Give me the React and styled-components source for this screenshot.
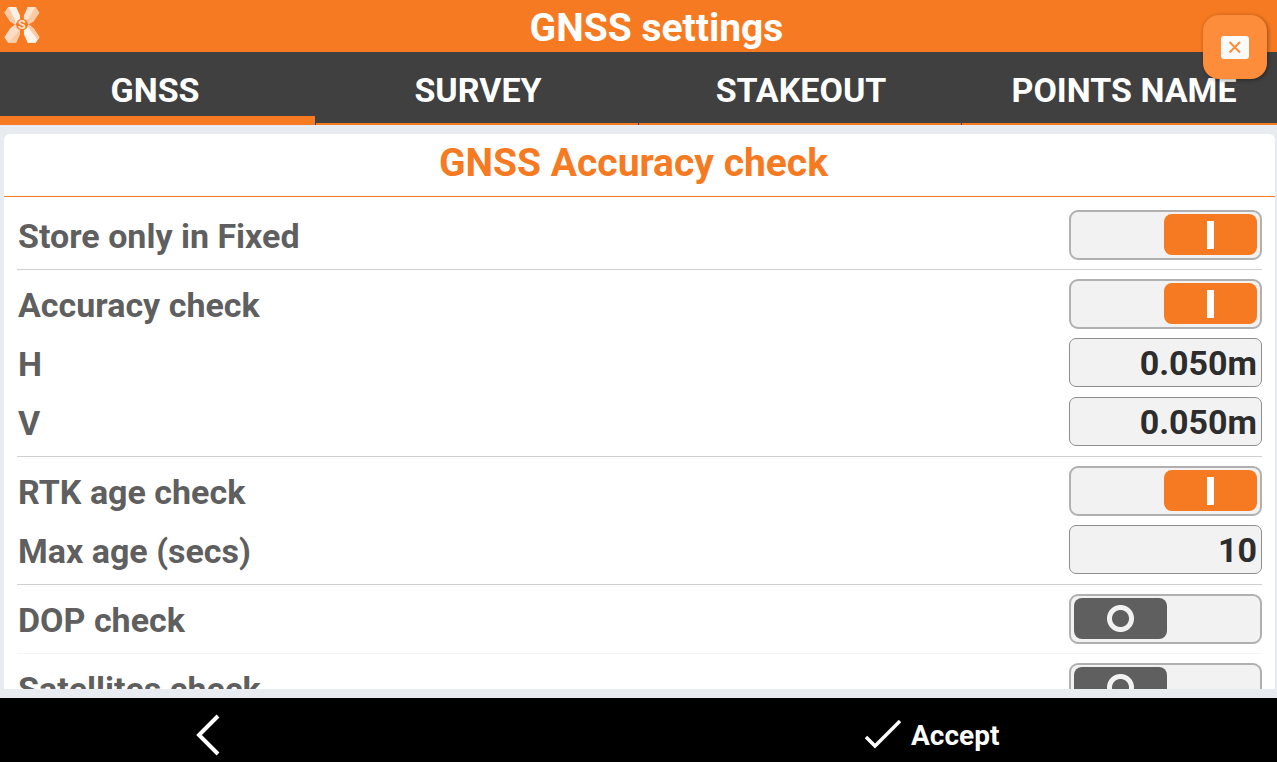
import React, { useState } from "react";
import styled, { createGlobalStyle } from "styled-components";

const tabs = ["GNSS", "SURVEY", "STAKEOUT", "POINTS NAME"];

const groups = [
  [{ id: "fixed", label: "Store only in Fixed", type: "toggle", value: true }],
  [
    { id: "accuracy", label: "Accuracy check", type: "toggle", value: true },
    { id: "h", label: "H", type: "text", value: "0.050m" },
    { id: "v", label: "V", type: "text", value: "0.050m" },
  ],
  [
    { id: "rtk", label: "RTK age check", type: "toggle", value: true },
    { id: "maxAge", label: "Max age (secs)", type: "text", value: "10" },
  ],
  [{ id: "dop", label: "DOP check", type: "toggle", value: false }],
  [{ id: "satellites", label: "Satellites check", type: "toggle", value: false }],
];

const Logo = () => (
  <svg width="36" height="36" viewBox="0 0 36 37" aria-hidden="true">
    <path d="M0 6L4 0H12L16 9V14L11 18L6 15Z" fill="#fff0e4" />
    <path d="M0 6L4 0L11 14L11 18L6 15Z" fill="#fcc9a5" />
    <path d="M36 6L32 0H24L20 9V14L25 18L30 15Z" fill="#fcc9a5" />
    <path d="M24 0H32L24 13L20 12V9Z" fill="#fee3cf" />
    <path d="M0 31L4 37H12L16 28V23L11 18L6 22Z" fill="#fcc9a5" />
    <path d="M11 18L16 23L4 37L0 31L6 22Z" fill="#fddcc4" />
    <path d="M36 31L32 37H24L20 28V23L25 18L30 22Z" fill="#fff3ea" />
    <path d="M25 18L30 22L36 31L34 34L24 20Z" fill="#fcc9a5" />
    <circle cx="18" cy="18" r="6" fill="#f67a21" />
    <text
      x="18"
      y="23"
      textAnchor="middle"
      fontFamily="Roboto, sans-serif"
      fontWeight="700"
      fontSize="13"
      fill="#fee3cf"
    >
      S
    </text>
  </svg>
);

const CloseIcon = () => (
  <svg width="28" height="23" viewBox="0 0 28 23" aria-hidden="true">
    <rect width="28" height="23" rx="3" fill="#fafafa" />
    <path d="M8.5 6L19 16.5M19 6L8.5 16.5" stroke="#fc8c3a" strokeWidth="2" />
  </svg>
);

const BackIcon = () => (
  <svg width="24" height="42" viewBox="0 0 24 42" aria-hidden="true">
    <path d="M22 2L3 21L22 40" fill="none" stroke="#fff" strokeWidth="4" />
  </svg>
);

const CheckIcon = () => (
  <svg width="36" height="30" viewBox="0 0 36 30" aria-hidden="true">
    <path d="M1 17L10 26L35 1" fill="none" stroke="#fff" strokeWidth="3.4" />
  </svg>
);

const Setting = ({ id, label, type, value }) => {
  const [current, setCurrent] = useState(value);

  return (
    <Row>
      <Label htmlFor={id}>{label}</Label>
      {type === "toggle" ? (
        <Toggle
          id={id}
          type="checkbox"
          checked={current}
          onChange={(e) => setCurrent(e.target.checked)}
        />
      ) : (
        <Field
          id={id}
          type="text"
          value={current}
          onChange={(e) => setCurrent(e.target.value)}
        />
      )}
    </Row>
  );
};

const App = () => {
  const [activeTab, setActiveTab] = useState("GNSS");

  return (
    <Page>
      <GlobalStyle />
      <Header>
        <Logo />
        <Title>GNSS settings</Title>
        <CloseButton type="button" aria-label="Close">
          <CloseIcon />
        </CloseButton>
      </Header>
      <Tabs>
        {tabs.map((tab) => (
          <Tab
            key={tab}
            type="button"
            $active={tab === activeTab}
            onClick={() => setActiveTab(tab)}
          >
            {tab}
          </Tab>
        ))}
      </Tabs>
      <Content>
        <Card>
          <CardTitle>GNSS Accuracy check</CardTitle>
          {groups.map((group) => (
            <Group key={group[0].id} $faint={group[0].id === "dop"}>
              {group.map((item) => (
                <Setting key={item.id} {...item} />
              ))}
            </Group>
          ))}
        </Card>
      </Content>
      <Footer>
        <FooterButton type="button" aria-label="Back">
          <BackIcon />
        </FooterButton>
        <span />
        <FooterButton type="button">
          <CheckIcon />
          Accept
        </FooterButton>
      </Footer>
    </Page>
  );
};

const GlobalStyle = createGlobalStyle`
  * {
    box-sizing: border-box;
  }
  body {
    margin: 0;
    font-family: Roboto, "Liberation Sans", sans-serif;
  }
  button,
  input {
    font-family: inherit;
  }
`;

const Page = styled.div`
  display: flex;
  flex-direction: column;
  height: 100vh;
  overflow: hidden;
  background: #e8ebf0;
`;

const Header = styled.header`
  position: relative;
  display: grid;
  grid-template-columns: 36px 1fr;
  align-items: center;
  flex: none;
  height: 52px;
  padding: 0 4px 2px;
  background: #f67a21;
`;

const Title = styled.h1`
  margin: 0;
  padding-top: 6px;
  color: #fff;
  font-size: 39px;
  font-weight: 700;
  line-height: 44px;
  text-align: center;
`;

const CloseButton = styled.button`
  position: absolute;
  top: 15px;
  right: 10px;
  z-index: 1;
  display: flex;
  align-items: center;
  justify-content: center;
  width: 64px;
  height: 64px;
  padding: 0;
  border: none;
  border-radius: 16px;
  background: #fd8d3b;
  box-shadow: 1px 1px 4px rgba(0, 0, 0, 0.4);
  cursor: pointer;
`;

const Tabs = styled.nav`
  display: grid;
  grid-template-columns: repeat(4, 1fr);
  gap: 1px;
  flex: none;
  height: 73px;
  margin: 0 -7px;
  background: #404040;
`;

const Tab = styled.button`
  padding: 2px 0 0 2px;
  border: none;
  background: transparent;
  box-shadow: inset 0 ${({ $active }) => ($active ? -9 : -2)}px #f67a21;
  color: #fff;
  font-size: 34px;
  font-weight: 700;
  line-height: 40px;
  white-space: nowrap;
  cursor: pointer;
`;

const Content = styled.main`
  flex: 1;
  min-height: 0;
  padding: 9px 2px 9px 4px;
`;

const Card = styled.section`
  height: 100%;
  overflow-y: auto;
  scrollbar-width: none;
  border-radius: 6px 6px 0 0;
  background: #fff;
`;

const CardTitle = styled.h2`
  margin: 0 0 4px;
  padding: 0 12px 4px 0;
  border-bottom: 1px solid #f67a21;
  color: #f67a21;
  font-size: 39px;
  font-weight: 700;
  line-height: 58px;
  text-align: center;
`;

const Group = styled.div`
  margin: 0 13px;
  padding: 4px 0 5px;
  border-bottom: 1px solid ${({ $faint }) => ($faint ? "#f5f5f5" : "#cfcfcf")};
`;

const Row = styled.div`
  display: flex;
  align-items: center;
  justify-content: space-between;
  height: 59px;
`;

const Label = styled.label`
  padding: 3px 0 0 1px;
  color: #5f5f5f;
  font-size: 34px;
  font-weight: 700;
  line-height: 40px;
`;

const Toggle = styled.input`
  appearance: none;
  display: flex;
  align-items: center;
  justify-content: ${({ checked }) => (checked ? "flex-end" : "flex-start")};
  width: 193px;
  height: 50px;
  margin: 0;
  padding: 0 3px;
  border: 2px solid #b0b0b0;
  border-radius: 9px;
  background: #f2f2f2;
  cursor: pointer;

  &::before {
    content: "";
    width: 93px;
    height: 41px;
    border-radius: 8px;
    background: ${({ checked }) =>
      checked
        ? "linear-gradient(#fff, #fff) center / 7px 28px no-repeat #f67a21"
        : "radial-gradient(circle, #5f5f5f 8px, #f2f2f2 9px, #f2f2f2 13px, #5f5f5f 14px)"};
  }
`;

const Field = styled.input`
  width: 193px;
  height: 49px;
  padding: 0 4px;
  border: 1px solid #8e8e8e;
  border-radius: 7px;
  background: #f2f2f2;
  color: #2d2d2d;
  font-size: 34px;
  font-weight: 700;
  text-align: right;
`;

const Footer = styled.footer`
  display: grid;
  grid-template-columns: 65fr 27fr 108fr;
  flex: none;
  height: 64px;
  background: #000;
`;

const FooterButton = styled.button`
  display: flex;
  align-items: center;
  justify-content: center;
  gap: 10px;
  padding: 10px 0 0;
  border: none;
  background: transparent;
  color: #fff;
  font-size: 28px;
  font-weight: 700;
  cursor: pointer;
`;

export default App;
